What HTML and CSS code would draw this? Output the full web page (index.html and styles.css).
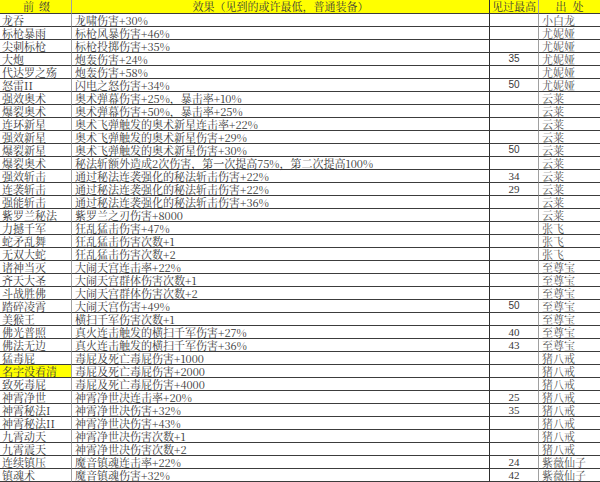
FILE: index.html
```html
<!DOCTYPE html>
<html lang="zh-CN">
<head>
<meta charset="utf-8">
<title>前缀表</title>
<link rel="stylesheet" href="styles.css">
</head>
<body>
<table class="sheet">
  <colgroup>
    <col class="c-prefix"><col class="c-effect"><col class="c-max"><col class="c-src">
  </colgroup>
  <thead>
    <tr class="head">
      <th class="h-prefix">前缀</th>
      <th>效果（见到的或许最低，普通装备）</th>
      <th>见过最高</th>
      <th class="h-src">出处</th>
    </tr>
  </thead>
  <tbody>
    <tr><td>龙吞</td><td>龙啸伤害+30%</td><td class="num"></td><td class="src">小白龙</td></tr>
    <tr><td>标枪暴雨</td><td>标枪风暴伤害+46%</td><td class="num"></td><td class="src">尤妮娅</td></tr>
    <tr><td>尖刺标枪</td><td>标枪投掷伤害+35%</td><td class="num"></td><td class="src">尤妮娅</td></tr>
    <tr><td>大炮</td><td>炮轰伤害+24%</td><td class="num">35</td><td class="src">尤妮娅</td></tr>
    <tr><td>代达罗之殇</td><td>炮轰伤害+58%</td><td class="num"></td><td class="src">尤妮娅</td></tr>
    <tr><td>怒雷II</td><td>闪电之怒伤害+34%</td><td class="num">50</td><td class="src">尤妮娅</td></tr>
    <tr><td>强效奥术</td><td>奥术弹幕伤害+25%，暴击率+10%</td><td class="num"></td><td class="src">云莱</td></tr>
    <tr><td>爆裂奥术</td><td>奥术弹幕伤害+50%，暴击率+25%</td><td class="num"></td><td class="src">云莱</td></tr>
    <tr><td>连环新星</td><td>奥术飞弹触发的奥术新星连击率+22%</td><td class="num"></td><td class="src">云莱</td></tr>
    <tr><td>强效新星</td><td>奥术飞弹触发的奥术新星伤害+29%</td><td class="num"></td><td class="src">云莱</td></tr>
    <tr><td>爆裂新星</td><td>奥术飞弹触发的奥术新星伤害+30%</td><td class="num">50</td><td class="src">云莱</td></tr>
    <tr><td>爆裂奥术</td><td>秘法斩额外造成2次伤害，第一次提高75%，第二次提高100%</td><td class="num"></td><td class="src">云莱</td></tr>
    <tr><td>强效斩击</td><td>通过秘法连袭强化的秘法斩击伤害+22%</td><td class="num serif">34</td><td class="src">云莱</td></tr>
    <tr><td>连袭斩击</td><td>通过秘法连袭强化的秘法斩击伤害+22%</td><td class="num serif">29</td><td class="src">云莱</td></tr>
    <tr><td>强能斩击</td><td>通过秘法连袭强化的秘法斩击伤害+36%</td><td class="num"></td><td class="src">云莱</td></tr>
    <tr><td>紫罗兰秘法</td><td>紫罗兰之刃伤害+8000</td><td class="num"></td><td class="src">云莱</td></tr>
    <tr><td>力撼千军</td><td>狂乱猛击伤害+47%</td><td class="num"></td><td class="src">张飞</td></tr>
    <tr><td>蛇矛乱舞</td><td>狂乱猛击伤害次数+1</td><td class="num"></td><td class="src">张飞</td></tr>
    <tr><td>无双大蛇</td><td>狂乱猛击伤害次数+2</td><td class="num"></td><td class="src">张飞</td></tr>
    <tr><td>诸神当灭</td><td>大闹天宫连击率+22%</td><td class="num"></td><td class="src">至尊宝</td></tr>
    <tr><td>齐天大圣</td><td>大闹天宫群体伤害次数+1</td><td class="num"></td><td class="src">至尊宝</td></tr>
    <tr><td>斗战胜佛</td><td>大闹天宫群体伤害次数+2</td><td class="num"></td><td class="src">至尊宝</td></tr>
    <tr><td>踏碎凌霄</td><td>大闹天宫伤害+49%</td><td class="num">50</td><td class="src">至尊宝</td></tr>
    <tr><td>美猴王</td><td>横扫千军伤害次数+1</td><td class="num"></td><td class="src">至尊宝</td></tr>
    <tr><td>佛光普照</td><td>真火连击触发的横扫千军伤害+27%</td><td class="num serif">40</td><td class="src">至尊宝</td></tr>
    <tr><td>佛法无边</td><td>真火连击触发的横扫千军伤害+36%</td><td class="num serif">43</td><td class="src">至尊宝</td></tr>
    <tr><td>猛毒屁</td><td>毒屁及死亡毒屁伤害+1000</td><td class="num"></td><td class="src">猪八戒</td></tr>
    <tr><td class="mark">名字没看清</td><td>毒屁及死亡毒屁伤害+2000</td><td class="num"></td><td class="src">猪八戒</td></tr>
    <tr><td>致死毒屁</td><td>毒屁及死亡毒屁伤害+4000</td><td class="num"></td><td class="src">猪八戒</td></tr>
    <tr><td>神霄净世</td><td>神霄净世决连击率+20%</td><td class="num serif">25</td><td class="src">猪八戒</td></tr>
    <tr><td>神霄秘法I</td><td>神霄净世决伤害+32%</td><td class="num serif">35</td><td class="src">猪八戒</td></tr>
    <tr><td>神霄秘法II</td><td>神霄净世决伤害+43%</td><td class="num"></td><td class="src">猪八戒</td></tr>
    <tr><td>九霄动天</td><td>神霄净世决伤害次数+1</td><td class="num"></td><td class="src">猪八戒</td></tr>
    <tr><td>九霄震天</td><td>神霄净世决伤害次数+2</td><td class="num"></td><td class="src">猪八戒</td></tr>
    <tr><td>连续镇压</td><td>魔音镇魂连击率+22%</td><td class="num serif">24</td><td class="src">紫薇仙子</td></tr>
    <tr><td>镇魂术</td><td>魔音镇魂伤害+32%</td><td class="num serif">42</td><td class="src">紫薇仙子</td></tr>
  </tbody>
</table>
</body>
</html>
```

FILE: styles.css
```css
html, body {
  margin: 0;
  padding: 0;
  background: #ffffff;
}

.sheet {
  width: 600px;
  table-layout: fixed;
  border-collapse: separate;
  border-spacing: 0;
  font-family: "Noto Serif CJK SC", "Liberation Serif", "Noto Sans CJK SC", serif;
  font-size: 11px;
  color: #383838;
}

.c-prefix { width: 72px; }
.c-effect { width: 418px; }
.c-max { width: 49px; }
.c-src { width: 61px; }

.sheet th,
.sheet td {
  box-sizing: border-box;
  padding: 0 0 0 3px;
  height: 13px;
  line-height: 12px;
  white-space: nowrap;
  vertical-align: bottom;
  text-align: left;
  font-weight: normal;
  border-bottom: 1px solid #3c3c3c;
  border-right: 1px solid #a0a0a0;
}

.sheet td:first-child,
.sheet th:first-child {
  padding-left: 2px;
}

.sheet td:nth-child(2),
.sheet th:nth-child(2) {
  border-right: 1px solid #2e2e2e;
}

.sheet td:last-child,
.sheet th:last-child {
  border-right: none;
}

.head th {
  height: 14px;
  line-height: 13px;
  background: #ffff00;
  text-align: center;
  padding: 0;
  color: #3a3a3a;
}

.h-prefix { letter-spacing: 5px; text-indent: 5px; }
.h-src { letter-spacing: 6px; text-indent: 6px; }

.sheet td.num {
  text-align: center;
  padding: 0;
  font-family: "Liberation Sans", "Noto Sans CJK SC", sans-serif;
  font-size: 10px;
}

.sheet td.num.serif {
  font-family: "Liberation Serif", "Noto Serif CJK SC", serif;
  font-size: 11px;
}

.sheet td.src {
  color: #555555;
  padding-left: 3px;
}

.sheet td.mark {
  background: #ffff00;
}
```
